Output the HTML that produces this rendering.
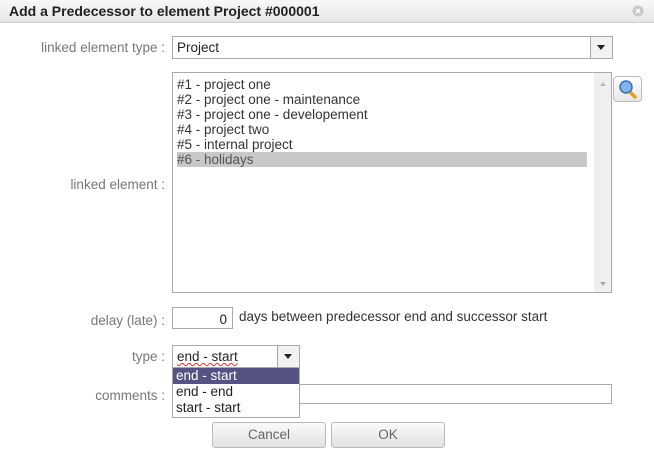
<!DOCTYPE html>
<html><head><style>
body{margin:0;width:654px;height:458px;background:#fff;font-family:"Liberation Sans",sans-serif;font-size:13.5px;color:#333;position:relative;overflow:hidden}
.a{position:absolute}
.title{left:0;top:0;width:654px;height:22px;background:linear-gradient(#f8f8f8,#e6e6e6);border-bottom:1px solid #d0d0d0}
.title span{position:absolute;left:9px;top:3px;font-weight:bold;font-size:14px;color:#222;white-space:nowrap}
.lbl{color:#777;text-align:right;width:160px;left:5px}
.box{border:1px solid #aaa;background:#fff;box-sizing:border-box}
.arrow{position:absolute;right:0;top:0;bottom:0;width:21px;border-left:1px solid #aaa;background:#f2f2f2}
.arrow:after{content:"";position:absolute;left:6px;top:8px;border-left:4px solid transparent;border-right:4px solid transparent;border-top:5px solid #222}
.btn{border:1px solid #bbb;border-radius:3px;background:linear-gradient(#fafafa,#e2e2e2);color:#666;text-align:center;line-height:24px;box-sizing:border-box}
</style></head><body>
<div class="a title"><span>Add a Predecessor to element Project #000001</span>
<svg class="a" style="left:632px;top:5px" width="12" height="12"><circle cx="6" cy="6" r="5.5" fill="#c8c8c8"/><path d="M4 4l4 4M8 4l-4 4" stroke="#fff" stroke-width="1.5"/></svg></div>

<div class="a lbl" style="top:40px">linked element type :</div>
<div class="a box" style="left:172px;top:36px;width:441px;height:23px"><span class="a" style="left:4px;top:3px;color:#222">Project</span><div class="arrow"></div></div>

<div class="a box" style="left:172px;top:72px;width:440px;height:221px">
<div class="a" style="left:4px;top:4px;line-height:15px;color:#333;width:410px">
<div>#1 - project one</div><div>#2 - project one - maintenance</div><div>#3 - project one - developement</div><div>#4 - project two</div><div>#5 - internal project</div><div style="background:#c8c8c8;color:#555">#6 - holidays</div></div>
<div class="a" style="right:0;top:0;width:17px;height:219px;background:#f0f0f0"></div>
<div class="a" style="right:5px;top:9px;border-left:3px solid transparent;border-right:3px solid transparent;border-bottom:4px solid #bbb"></div>
<div class="a" style="right:5px;bottom:6px;border-left:3px solid transparent;border-right:3px solid transparent;border-top:4px solid #aaa"></div>
</div>
<div class="a" style="left:613px;top:76px;width:29px;height:26px;border:1px solid #bbb;border-radius:4px;background:linear-gradient(#fff,#e8e8e8);box-sizing:border-box">
<svg width="27" height="24"><line x1="16" y1="15" x2="21" y2="20" stroke="#e0a020" stroke-width="3.5" stroke-linecap="round"/><circle cx="12" cy="10" r="6" fill="#7fb6f0" stroke="#3a6fb0" stroke-width="1.5"/></svg></div>
<div class="a lbl" style="top:177px">linked element :</div>

<div class="a lbl" style="top:313px">delay (late) :</div>
<div class="a box" style="left:172px;top:307px;width:61px;height:22px"><span class="a" style="right:5px;top:4px;color:#222">0</span></div>
<div class="a" style="left:239px;top:309px;color:#333">days between predecessor end and successor start</div>

<div class="a lbl" style="top:349px">type :</div>
<div class="a box" style="left:172px;top:345px;width:128px;height:23px"><span class="a" style="left:4px;top:3px;color:#222;text-decoration:underline wavy #d33;text-decoration-thickness:1px">end - start</span><div class="arrow"></div></div>

<div class="a lbl" style="top:388px">comments :</div>
<div class="a box" style="left:172px;top:384px;width:440px;height:20px"></div>
<div class="a box" style="left:172px;top:367px;width:128px;height:51px;background:#fff;line-height:16px">
<div style="background:#565283;color:#fff;padding-left:3px">end - start</div><div style="padding-left:3px;color:#222">end - end</div><div style="padding-left:3px;color:#222">start - start</div></div>

<div class="a btn" style="left:212px;top:422px;width:114px;height:26px">Cancel</div>
<div class="a btn" style="left:331px;top:422px;width:114px;height:26px">OK</div>
</body></html>
